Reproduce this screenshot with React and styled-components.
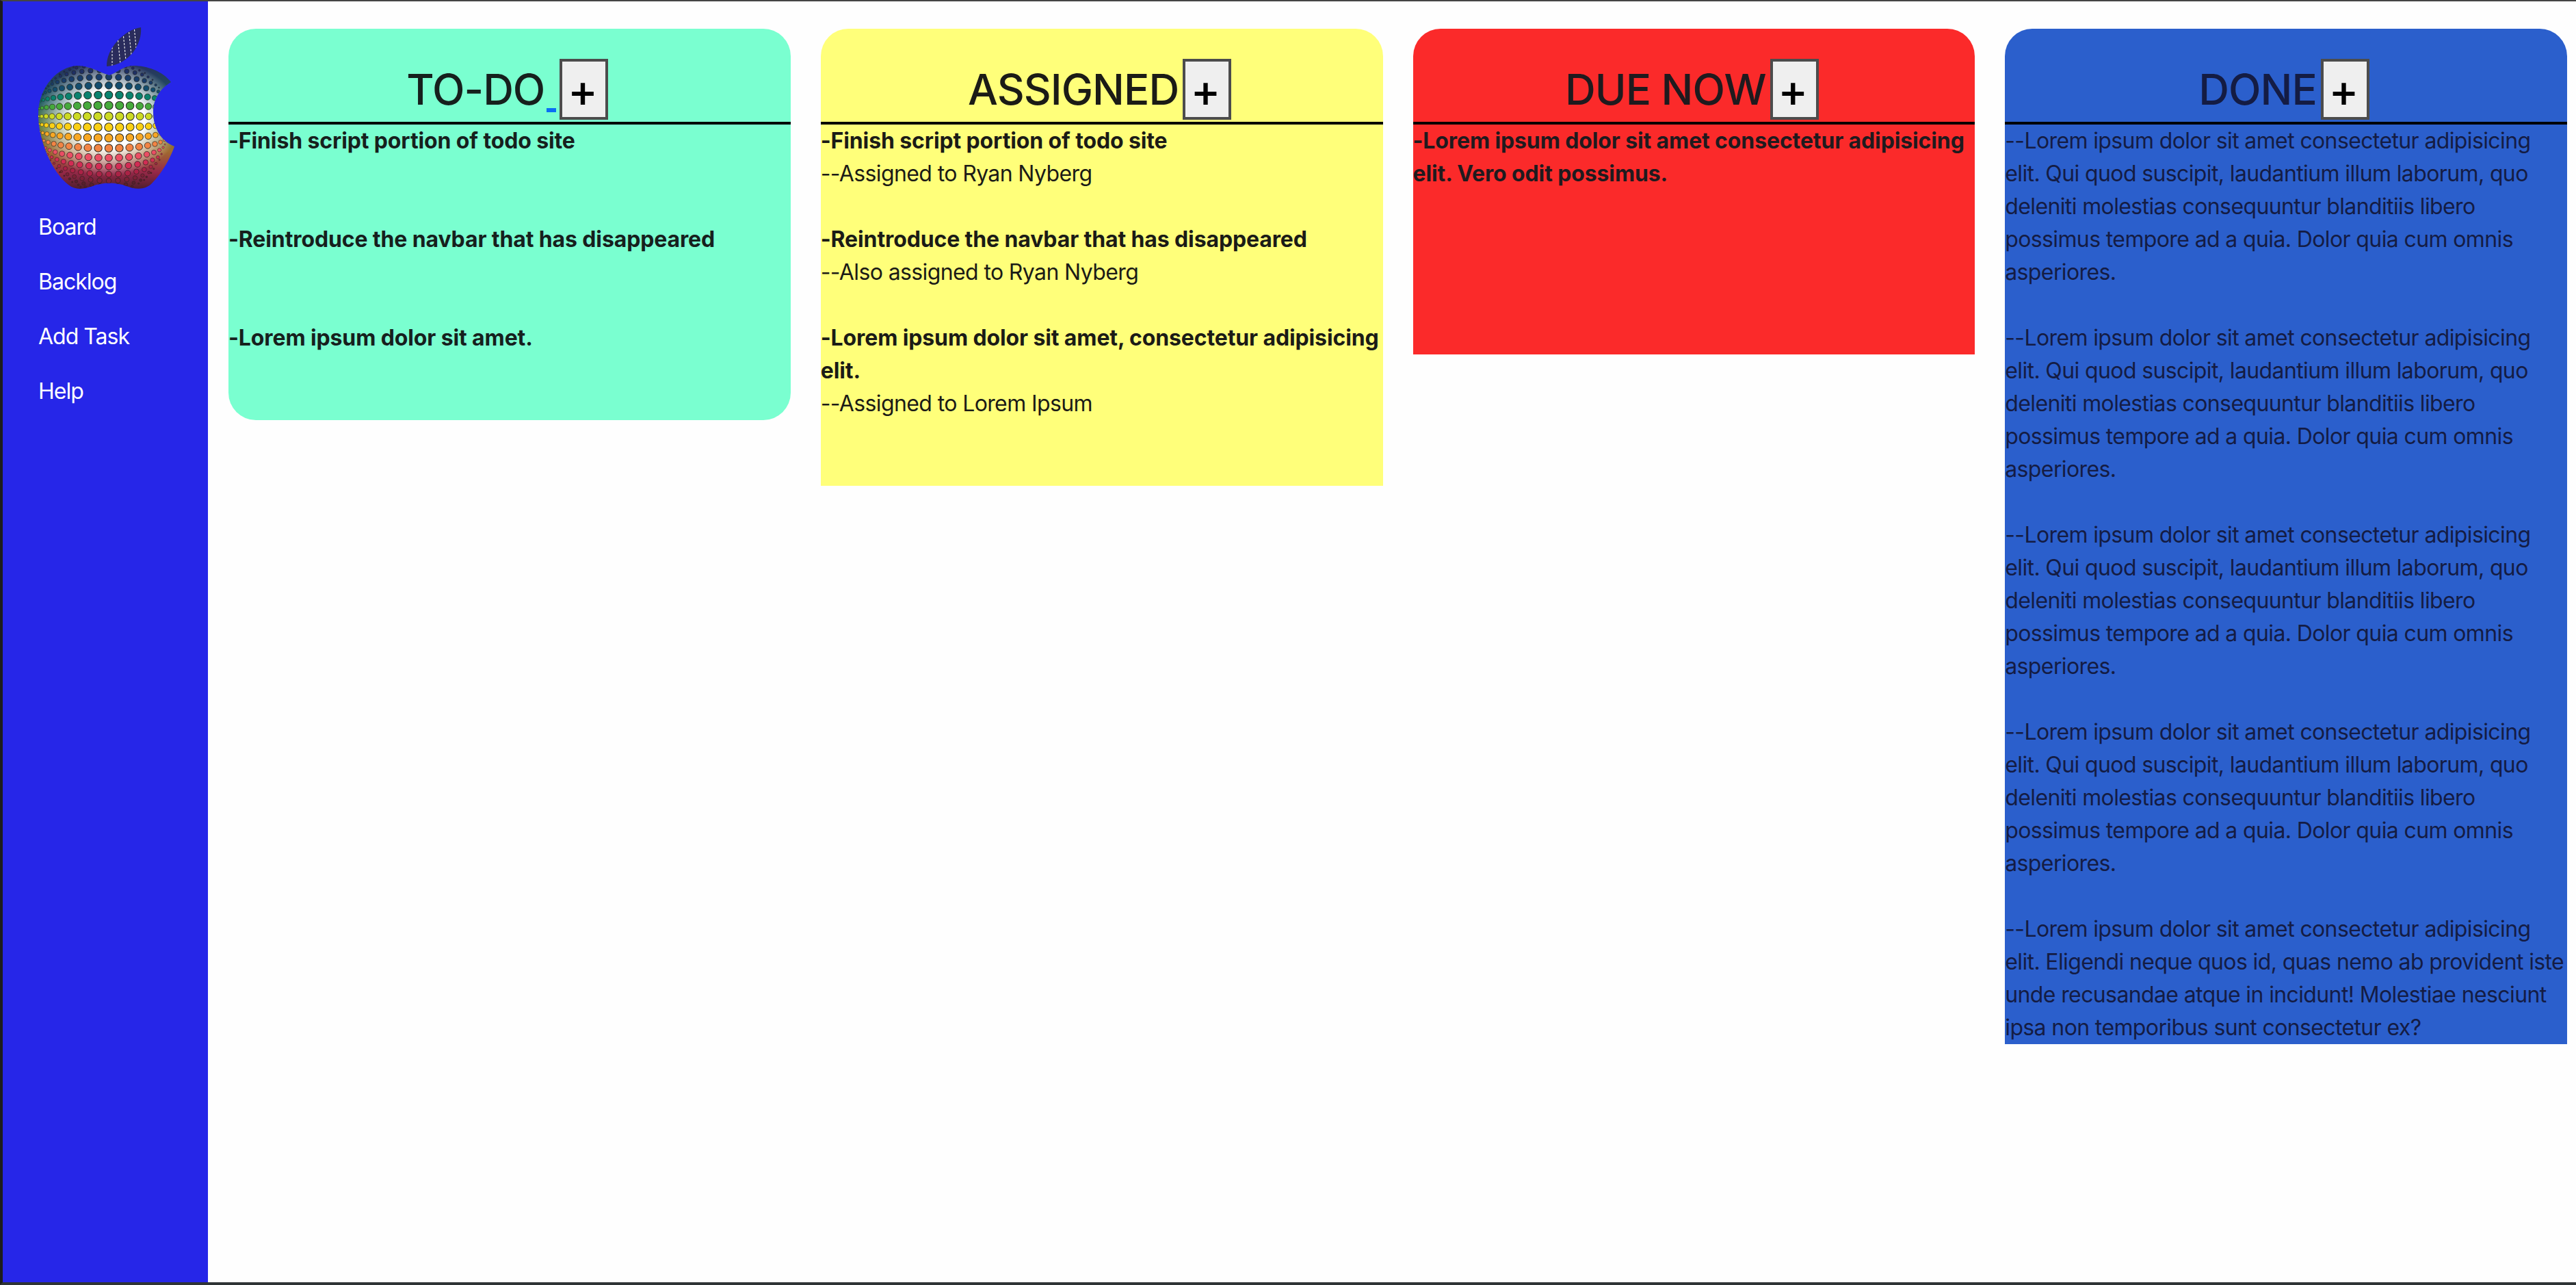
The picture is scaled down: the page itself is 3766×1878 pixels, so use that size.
import React from "react";
import styled, { createGlobalStyle } from "styled-components";

const lorem =
  "--Lorem ipsum dolor sit amet consectetur adipisicing elit. Qui quod suscipit, laudantium illum laborum, quo deleniti molestias consequuntur blanditiis libero possimus tempore ad a quia. Dolor quia cum omnis asperiores.";

const columns = [
  {
    title: "TO-DO",
    color: "#7affd0",
    ink: "#16201d",
    link: true,
    rounded: true,
    tasks: [
      { name: "-Finish script portion of todo site", after: 96 },
      { name: "-Reintroduce the navbar that has disappeared", after: 96 },
      { name: "-Lorem ipsum dolor sit amet.", after: 96 },
    ],
  },
  {
    title: "ASSIGNED",
    color: "#ffff7a",
    ink: "#1b1b16",
    tasks: [
      { name: "-Finish script portion of todo site", note: "--Assigned to Ryan Nyberg", after: 48 },
      { name: "-Reintroduce the navbar that has disappeared", note: "--Also assigned to Ryan Nyberg", after: 48 },
      { name: "-Lorem ipsum dolor sit amet, consectetur adipisicing elit.", note: "--Assigned to Lorem Ipsum", after: 96 },
    ],
  },
  {
    title: "DUE NOW",
    color: "#fb2a2a",
    ink: "#1f1a1e",
    tasks: [{ name: "-Lorem ipsum dolor sit amet consectetur adipisicing elit. Vero odit possimus.", after: 240 }],
  },
  {
    title: "DONE",
    color: "#2b5fcc",
    ink: "#141c44",
    tasks: [
      { note: lorem, after: 48 },
      { note: lorem, after: 48 },
      { note: lorem, after: 48 },
      { note: lorem, after: 48 },
      {
        note: "--Lorem ipsum dolor sit amet consectetur adipisicing elit. Eligendi neque quos id, quas nemo ab provident iste unde recusandae atque in incidunt! Molestiae nesciunt ipsa non temporibus sunt consectetur ex?",
        after: 0,
      },
    ],
  },
];

const navItems = ["Board", "Backlog", "Add Task", "Help"];

// colour of the dots from the top of the apple to the bottom
const ramp = [
  [-90, [34, 40, 96]],
  [-50, [20, 70, 110]],
  [-32, [10, 130, 110]],
  [-16, [70, 170, 60]],
  [0, [204, 218, 36]],
  [16, [250, 208, 20]],
  [32, [248, 168, 36]],
  [48, [242, 132, 68]],
  [64, [234, 78, 100]],
  [84, [204, 36, 80]],
  [125, [90, 30, 45]],
];

const dotColor = (v) => {
  for (let i = 1; i < ramp.length; i++) {
    if (v <= ramp[i][0]) {
      const [v0, c0] = ramp[i - 1];
      const [v1, c1] = ramp[i];
      const t = Math.max(0, (v - v0) / (v1 - v0));
      const c = c0.map((n, k) => Math.round(n + (c1[k] - n) * t));
      return `rgb(${c.join(",")})`;
    }
  }
  return "rgb(90,30,45)";
};

// a square grid of dots bulged round the centre of the apple, like on a ball
const appleDots = [];
const STEP = 16;
for (let row = -9; row <= 12; row++) {
  for (let col = -11; col <= 11; col++) {
    const u = col * STEP;
    const v = row * STEP;
    const r = Math.hypot(u, v);
    const radius = r ? Math.hypot(((u < 0 ? 104 : 86) * u) / r, ((v < 0 ? 80 : 112) * v) / r) : 100;
    const angle = r / radius;
    if (angle >= Math.PI / 2) continue;
    const spread = r ? (radius * Math.sin(angle)) / r : 0;
    const size = Math.pow(Math.cos(angle), 0.8);
    appleDots.push({
      key: `${row}:${col}`,
      x: 159 + u * spread,
      y: 168 + v * spread,
      r: Math.max(1, 6.2 * size),
      width: Math.max(0.5, 1.1 * size),
      fill: dotColor(v),
    });
  }
}

const APPLE =
  "M160 108 C145 104 132 94 113 94 C85 95 56 125 56 165 C56 205 78 252 100 268 C110 276 122 275 135 270 C150 264 170 264 185 270 C198 275 212 276 222 266 C235 253 248 232 255 212 C235 204 224 185 224 162 C224 142 234 128 250 118 C238 102 215 94 195 94 C180 94 172 104 160 108 Z";
const LEAF = "M156 95 C155 70 180 42 206 38 C208 62 190 92 156 95 Z";

const AppleLogo = () => (
  <LogoSvg viewBox="0 0 300 290">
    <defs>
      <clipPath id="apple-clip">
        <path d={APPLE} />
      </clipPath>
      <clipPath id="leaf-clip">
        <path d={LEAF} />
      </clipPath>
      <linearGradient id="apple-base" x1="0" y1="0" x2="0" y2="1">
        <stop offset="0" stopColor="#28305e" />
        <stop offset="0.3" stopColor="#1c5a60" />
        <stop offset="0.5" stopColor="#5a7a30" />
        <stop offset="0.68" stopColor="#a06a30" />
        <stop offset="0.84" stopColor="#962848" />
        <stop offset="1" stopColor="#3e1c28" />
      </linearGradient>
      <radialGradient id="apple-glow" gradientUnits="userSpaceOnUse" cx="159" cy="172" r="1" gradientTransform="translate(159 172) scale(106 84) translate(-159 -172)">
        <stop offset="0" stopColor="#fff" />
        <stop offset="0.5" stopColor="#fff" />
        <stop offset="1" stopColor="#fff" stopOpacity="0" />
      </radialGradient>
    </defs>
    <g clipPath="url(#apple-clip)">
      <rect x="50" y="90" width="210" height="190" fill="url(#apple-base)" />
      <rect x="50" y="90" width="210" height="190" fill="url(#apple-glow)" />
      {appleDots.map((d) => (
        <circle key={d.key} cx={d.x} cy={d.y} r={d.r} fill={d.fill} stroke="#26261e" strokeWidth={d.width} />
      ))}
    </g>
    <path d={LEAF} fill="#2a2c5c" />
    <g clipPath="url(#leaf-clip)" stroke="#f2f2f2" strokeWidth="1.1" strokeDasharray="3 2" fill="none">
      <path d="M164 62 L164 96" />
      <path d="M172 52 L176 92" />
      <path d="M180 46 L184 86" />
      <path d="M188 40 L192 78" />
      <path d="M196 36 L199 68" />
    </g>
  </LogoSvg>
);

const App = () => (
  <Frame>
    <GlobalStyle />
    <Sidebar>
      <AppleLogo />
      <Nav>
        {navItems.map((item) => (
          <NavLink key={item}>{item}</NavLink>
        ))}
      </Nav>
    </Sidebar>
    <Board>
      {columns.map((col) => (
        <Column key={col.title} $color={col.color} $ink={col.ink} $rounded={col.rounded}>
          <ColumnHeader>
            <ColumnTitle>{col.title}</ColumnTitle>
            {col.link && <StrayLink />}
            <AddButton>+</AddButton>
          </ColumnHeader>
          {col.tasks.map((task, i) => (
            <Task key={i} $after={task.after}>
              {task.name && <TaskName>{task.name}</TaskName>}
              {task.note && <TaskNote>{task.note}</TaskNote>}
            </Task>
          ))}
        </Column>
      ))}
    </Board>
  </Frame>
);

const GlobalStyle = createGlobalStyle`
  html, body {
    margin: 0;
    background: #fefefe;
  }
  * {
    box-sizing: border-box;
  }
`;

const Frame = styled.div`
  display: flex;
  height: 100vh;
  overflow: hidden;
  background: #fefefe;
  border-top: 2px solid #444444;
  border-bottom: 4px solid #2f3436;
  border-left: 4px solid #1c1c1c;
  font-family: Inter, "Liberation Sans", sans-serif;
`;

const Sidebar = styled.aside`
  flex: 0 0 300px;
  background: #2626e8;
`;

const LogoSvg = styled.svg`
  display: block;
  width: 300px;
  height: 290px;
  margin-left: -4px;
`;

const Nav = styled.nav`
  display: flex;
  flex-direction: column;
`;

const NavLink = styled.a`
  height: 80px;
  padding-left: 52px;
  color: #ffffff;
  font-size: 32px;
  letter-spacing: -1px;
  line-height: 80px;
`;

const Board = styled.main`
  flex: 1;
  display: grid;
  grid-template-columns: repeat(4, 1fr);
  gap: 44px;
  align-items: start;
  padding: 40px 13px 0 30px;
`;

const Column = styled.section`
  overflow: hidden;
  background: ${(p) => p.$color};
  color: ${(p) => p.$ink};
  border-radius: ${(p) => (p.$rounded ? "40px" : "40px 40px 0 0")};
  font-size: 32px;
  line-height: 48px;
`;

const ColumnHeader = styled.header`
  display: flex;
  align-items: center;
  justify-content: center;
  height: 140px;
  padding: 44px 6px 3px 0;
  border-bottom: 4px solid #000000;
`;

const ColumnTitle = styled.h2`
  margin: 0 6px 0 0;
  font-size: 62px;
  font-weight: 500;
  letter-spacing: -1px;
  line-height: 1;
`;

const StrayLink = styled.span`
  align-self: flex-start;
  width: 14px;
  height: 6px;
  margin: 72px 5px 0 -3px;
  background: #0a6ef5;
`;

const AddButton = styled.button`
  width: 71px;
  height: 89px;
  padding: 2px 4px 0 0;
  background: #efefef;
  border: 4px solid #4c4c4c;
  color: #000000;
  font-family: inherit;
  font-size: 66px;
  font-weight: 500;
  line-height: 1;
`;

const Task = styled.div`
  margin-bottom: ${(p) => p.$after}px;
`;

const TaskName = styled.div`
  font-weight: 700;
  letter-spacing: -0.12px;
`;

const TaskNote = styled.div`
  font-weight: 400;
  letter-spacing: -0.62px;
`;

export default App;
